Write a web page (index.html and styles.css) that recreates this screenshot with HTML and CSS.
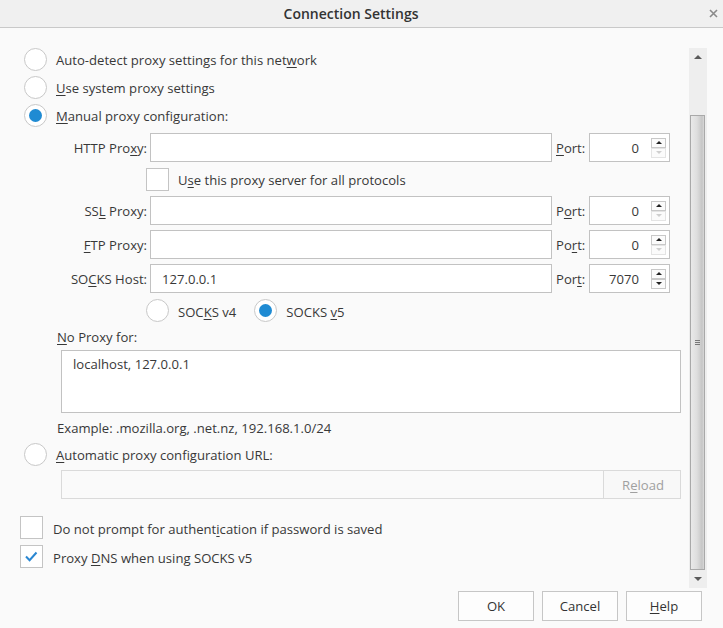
FILE: index.html
```html
<!DOCTYPE html>
<html>
<head>
<meta charset="utf-8">
<title>Connection Settings</title>
<link rel="stylesheet" href="styles.css">
</head>
<body>
<div class="dialog">
  <div class="titlebar">
    <div class="title">Connection Settings</div>
    <svg class="close" width="9" height="9" viewBox="0 0 9 9"><path d="M1 1 L8 8 M8 1 L1 8" stroke="#8a8a8a" stroke-width="1.6" fill="none"/></svg>
  </div>
  <div class="main">
    <div class="viewport">
      <div class="content">
        <div class="opt-row first"><span class="radio"></span><span class="opt-text">Auto-detect proxy settings for this net<u>w</u>ork</span></div>
        <div class="opt-row"><span class="radio"></span><span class="opt-text"><u>U</u>se system proxy settings</span></div>
        <div class="opt-row"><span class="radio checked"></span><span class="opt-text"><u>M</u>anual proxy configuration:</span></div>

        <div class="field-row http">
          <span class="field-label">HTTP Pro<u>x</u>y:</span>
          <span class="text-input"></span>
          <span class="port-label"><u>P</u>ort:</span>
          <span class="port-input"><span class="port-value">0</span><span class="spinner"><span class="spin up"></span><span class="spin down off"></span></span></span>
        </div>
        <div class="check-row inner"><span class="checkbox"></span><span class="opt-text">U<u>s</u>e this proxy server for all protocols</span></div>
        <div class="field-row ssl">
          <span class="field-label">SS<u>L</u> Proxy:</span>
          <span class="text-input"></span>
          <span class="port-label">P<u>o</u>rt:</span>
          <span class="port-input"><span class="port-value">0</span><span class="spinner"><span class="spin up"></span><span class="spin down off"></span></span></span>
        </div>
        <div class="field-row">
          <span class="field-label"><u>F</u>TP Proxy:</span>
          <span class="text-input"></span>
          <span class="port-label">Po<u>r</u>t:</span>
          <span class="port-input"><span class="port-value">0</span><span class="spinner"><span class="spin up"></span><span class="spin down off"></span></span></span>
        </div>
        <div class="field-row">
          <span class="field-label">SO<u>C</u>KS Host:</span>
          <span class="text-input"><span class="input-value">127.0.0.1</span></span>
          <span class="port-label">Por<u>t</u>:</span>
          <span class="port-input"><span class="port-value">7070</span><span class="spinner"><span class="spin up"></span><span class="spin down"></span></span></span>
        </div>
        <div class="version-row">
          <span class="radio"></span><span class="opt-text v4">SOC<u>K</u>S v4</span>
          <span class="radio checked"></span><span class="opt-text">SOCKS <u>v</u>5</span>
        </div>
        <div class="sub-label"><u>N</u>o Proxy for:</div>
        <div class="textarea">localhost, 127.0.0.1</div>
        <div class="sub-label example">Example: .mozilla.org, .net.nz, 192.168.1.0/24</div>
        <div class="opt-row auto"><span class="radio"></span><span class="opt-text"><u>A</u>utomatic proxy configuration URL:</span></div>
        <div class="url-row">
          <span class="url-input"></span>
          <span class="reload">R<u>e</u>load</span>
        </div>
        <div class="check-row outer first-check"><span class="checkbox"></span><span class="opt-text">Do not prompt for authent<u>i</u>cation if password is saved</span></div>
        <div class="check-row outer"><span class="checkbox checked"><svg width="21" height="21" viewBox="0 0 21 21"><path d="M5 10.5 L8.6 14.2 L15.5 6.5" stroke="#2a87d2" stroke-width="2" fill="none"/></svg></span><span class="opt-text">Proxy <u>D</u>NS when using SOCKS v5</span></div>
      </div>
    </div>
    <div class="scrollbar">
      <div class="sb-btn"><span class="arrow-up"></span></div>
      <div class="sb-thumb"><span class="grip"></span></div>
      <div class="sb-btn"><span class="arrow-down"></span></div>
    </div>
  </div>
  <div class="footer">
    <button class="btn">OK</button>
    <button class="btn">Cancel</button>
    <button class="btn"><u>H</u>elp</button>
  </div>
</div>
</body>
</html>
```

FILE: styles.css
```css
* { box-sizing: border-box; }
html, body { margin: 0; padding: 0; }
body {
  font-family: "Open Sans", "Noto Sans", sans-serif;
  font-size: 13.1px;
  color: #383838;
  background: #fafafa;
}
u { text-decoration: underline; text-underline-offset: 2px; text-decoration-thickness: 1px; }

.dialog {
  width: 723px;
  height: 628px;
  display: flex;
  flex-direction: column;
  background: #fafafa;
  overflow: hidden;
}

.titlebar {
  flex: none;
  height: 28px;
  background: #f0f0f0;
  border-bottom: 1px solid #c9c9c9;
  display: flex;
  align-items: center;
}
.title {
  flex: 1;
  text-align: center;
  font-weight: 600;
  font-size: 14px;
  color: #333;
  padding-bottom: 1px;
}
.close { flex: none; margin: 0 5px 1px 7px; }

.main {
  flex: none;
  height: 560px;
  display: flex;
  padding: 20px 16px 0 0;
}
.viewport {
  flex: 1;
  height: 540px;
  overflow: hidden;
}
.content {
  padding-left: 24px;
}

.opt-row {
  height: 28px;
  display: flex;
  align-items: center;
}
.opt-row.first { margin-top: -3px; }
.opt-row.auto { margin-top: 2px; }
.opt-text { white-space: nowrap; padding-top: 2px; }

.radio {
  flex: none;
  width: 23px;
  height: 23px;
  border-radius: 50%;
  border: 1px solid #c8c8c8;
  background: #fff;
  margin-right: 9px;
  display: flex;
  align-items: center;
  justify-content: center;
}
.radio.checked::after {
  content: "";
  width: 13px;
  height: 13px;
  border-radius: 50%;
  background: #1f8bd3;
}

.checkbox {
  flex: none;
  width: 23px;
  height: 23px;
  border: 1px solid #c4c4c4;
  background: #fff;
  margin-right: 9px;
  display: flex;
  align-items: center;
  justify-content: center;
}

.field-row {
  height: 29px;
  display: flex;
  align-items: center;
  margin-top: 5px;
}
.field-row.http { margin-top: 4px; }
.field-row.ssl { margin-top: 0; }
.field-label {
  width: 126px;
  text-align: right;
  padding-right: 3px;
  white-space: nowrap;
}
.text-input {
  width: 402px;
  height: 29px;
  background: #fff;
  border: 1px solid #c2c2c2;
  display: flex;
  align-items: center;
  padding-left: 11px;
}
.port-label {
  width: 37px;
  padding-left: 4px;
}
.port-input {
  width: 81px;
  height: 29px;
  background: #fff;
  border: 1px solid #c2c2c2;
  display: flex;
  align-items: center;
  padding-right: 3px;
}
.port-value {
  flex: 1;
  text-align: right;
  padding-right: 12px;
}
.spinner {
  flex: none;
  width: 15px;
  display: flex;
  flex-direction: column;
}
.spin {
  height: 10px;
  border: 1px solid #c8c8c8;
  background: #fbfbfb;
  display: flex;
  align-items: center;
  justify-content: center;
}
.spin.off { border-color: #e4e4e4; }
.spin.up::after {
  content: "";
  border-left: 3px solid transparent;
  border-right: 3px solid transparent;
  border-bottom: 3px solid #222;
}
.spin.down::after {
  content: "";
  border-left: 3px solid transparent;
  border-right: 3px solid transparent;
  border-top: 3px solid #222;
}
.spin.down.off::after { border-top-color: #cfcfcf; }

.check-row {
  display: flex;
  align-items: center;
}
.check-row.inner {
  height: 34px;
  padding-left: 122px;
}
.check-row.outer {
  height: 29px;
  margin-left: -4px;
}
.check-row.outer .checkbox { margin-right: 10px; }
.check-row.first-check { margin-top: 14px; }

.version-row {
  height: 27px;
  margin-top: 4px;
  padding-left: 122px;
  display: flex;
  align-items: center;
}
.opt-text.v4 { margin-right: 18px; }

.sub-label {
  height: 20px;
  line-height: 20px;
  margin-top: 3px;
  padding-left: 33px;
}
.sub-label.example { margin-top: 5px; }

.textarea {
  margin: 3px 0 0 37px;
  width: 620px;
  height: 63px;
  background: #fff;
  border: 1px solid #c2c2c2;
  padding: 4px 11px;
  line-height: 18px;
}

.url-row {
  margin: 2px 0 0 37px;
  display: flex;
  height: 29px;
}
.url-input {
  width: 543px;
  height: 29px;
  border: 1px solid #dadada;
  background: #fafafa;
}
.reload {
  width: 77px;
  height: 29px;
  border: 1px solid #dadada;
  border-left: none;
  background: #f8f8f8;
  color: #a0a0a0;
  display: flex;
  align-items: center;
  justify-content: center;
  padding-left: 2px;
}

.scrollbar {
  flex: none;
  width: 18px;
  height: 540px;
  background: #eeeeee;
  display: flex;
  flex-direction: column;
}
.sb-btn {
  height: 18px;
  display: flex;
  align-items: center;
  justify-content: center;
}
.arrow-up {
  border-left: 4px solid transparent;
  border-right: 4px solid transparent;
  border-bottom: 4px solid #5a5a5a;
}
.arrow-down {
  border-left: 4px solid transparent;
  border-right: 4px solid transparent;
  border-top: 4px solid #5a5a5a;
}
.sb-thumb {
  margin: 49px 2px 0 1px;
  height: 455px;
  border: 1px solid #a9a9a9;
  background: linear-gradient(to right, #e9e9e9 0%, #dedede 45%, #c6c6c6 85%, #d9d9d9 100%);
  display: flex;
  align-items: center;
  justify-content: center;
}
.grip {
  width: 5px;
  height: 5px;
  border-top: 1px solid #777;
  border-bottom: 1px solid #777;
  position: relative;
}
.grip::after {
  content: "";
  position: absolute;
  left: 0;
  right: 0;
  top: 1px;
  border-top: 1px solid #777;
}

.footer {
  flex: 1;
  display: flex;
  justify-content: flex-end;
  align-items: flex-start;
  gap: 8px;
  padding: 3px 21px 0 0;
}
.btn {
  width: 76px;
  height: 30px;
  border: 1px solid #c6c6c6;
  background: #fdfdfd;
  font-family: "Open Sans", "Noto Sans", sans-serif;
  font-size: 13.1px;
  color: #333;
  padding: 0;
}
```
